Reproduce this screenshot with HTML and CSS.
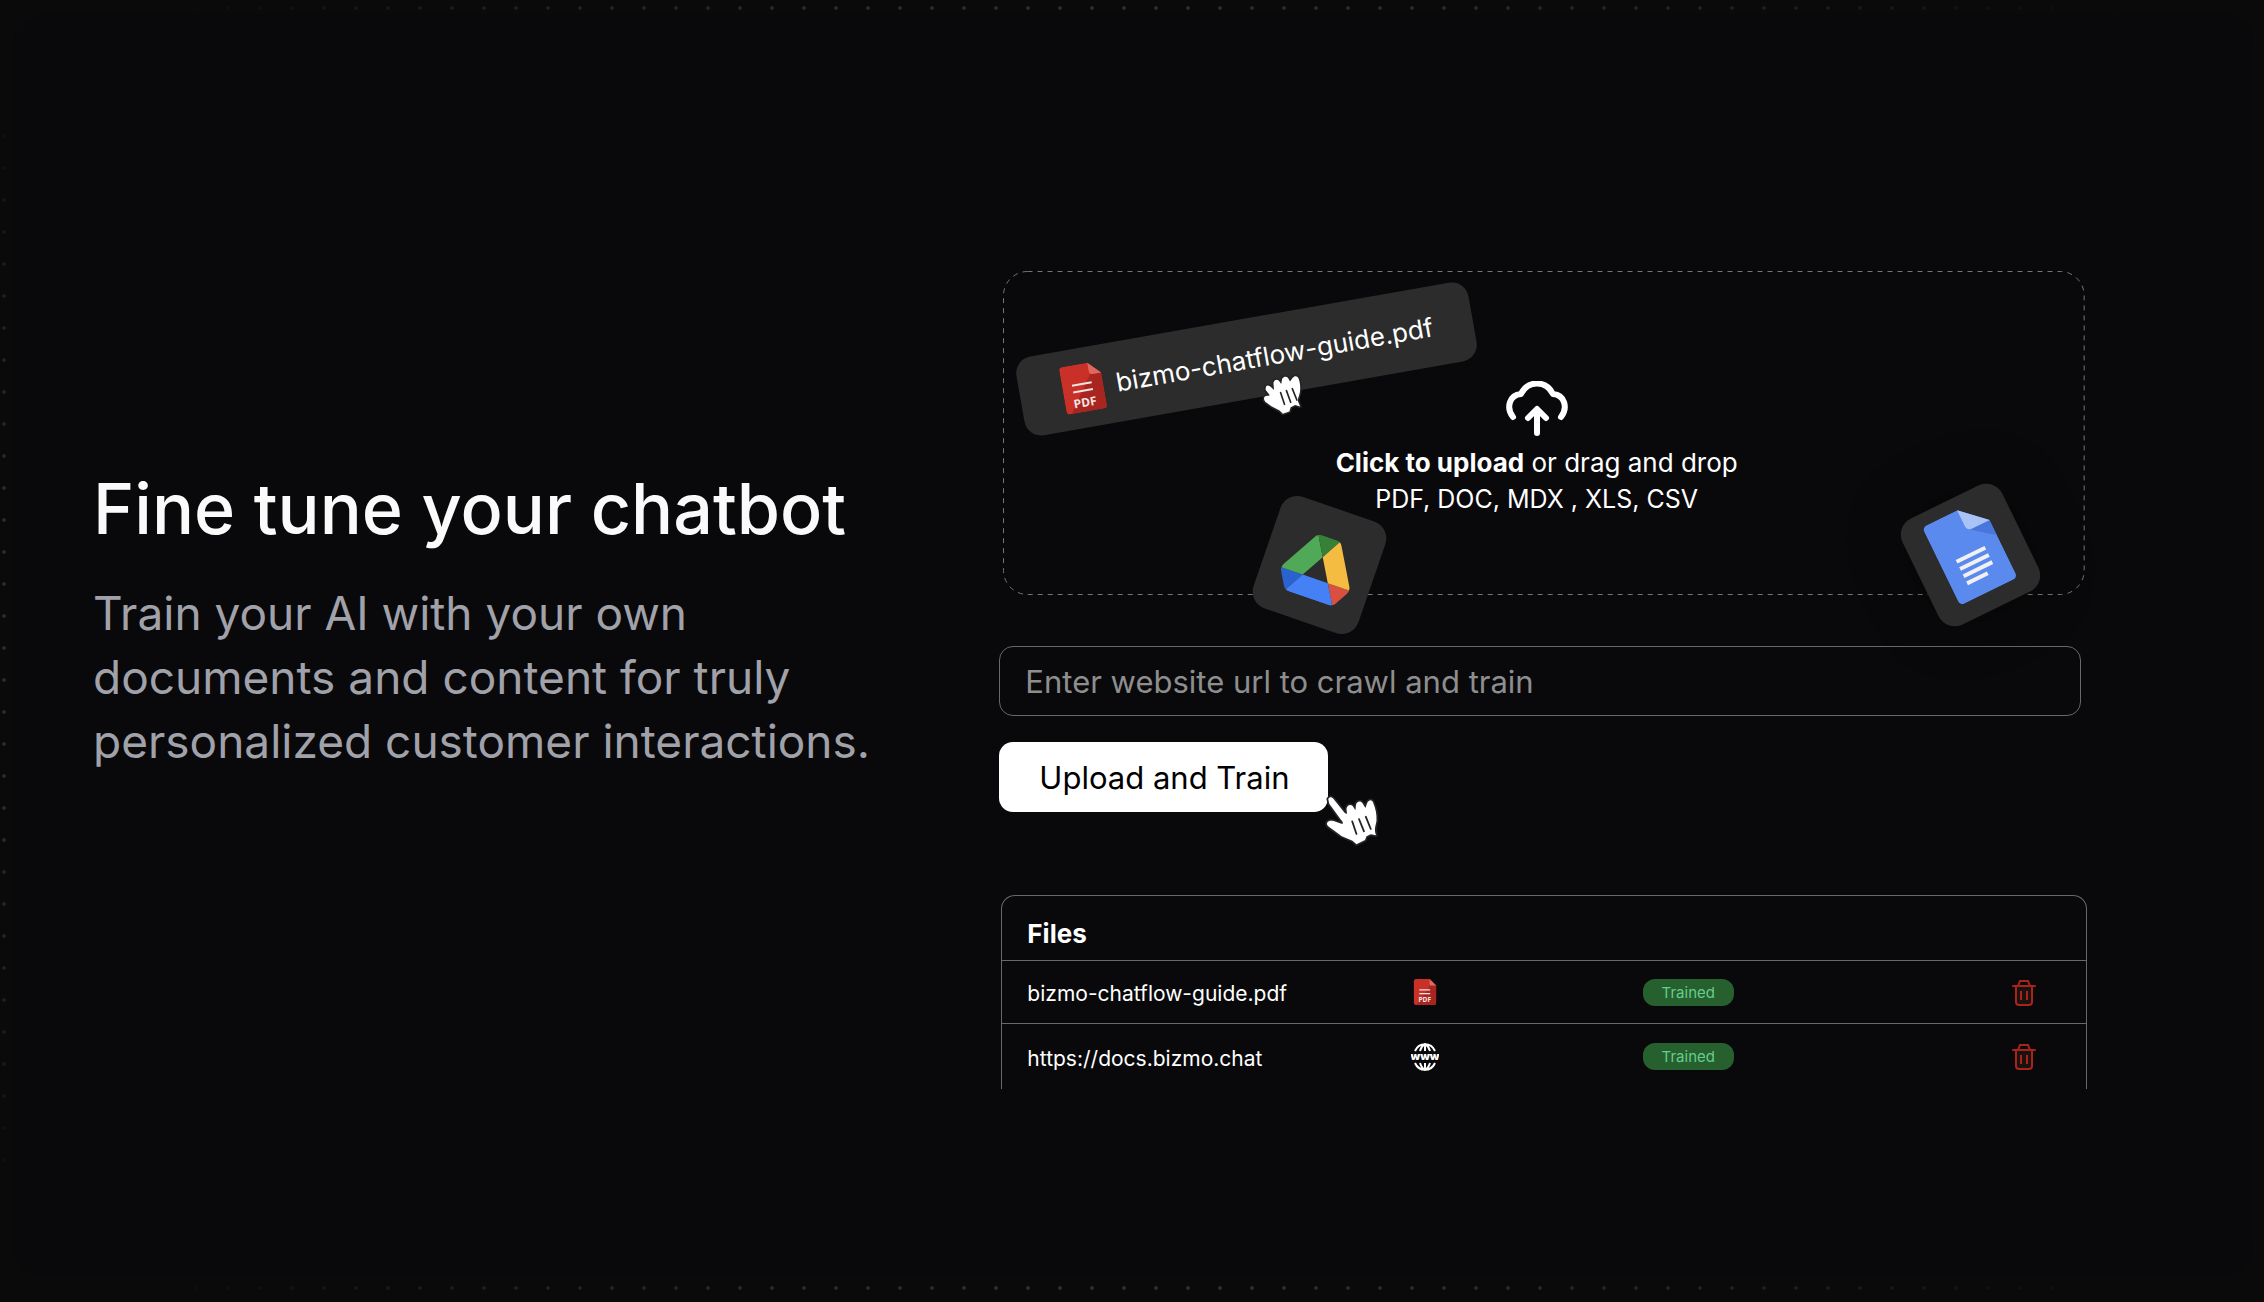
FILE: index.html
```html
<!DOCTYPE html>
<html lang="en">
<head>
    <meta charset="UTF-8">
    <meta name="viewport" content="width=device-width, initial-scale=1.0">
    <title>Fine tune your chatbot</title>
    <link rel="stylesheet" href="styles.css">
</head>
<body>
    <!-- shared icons -->
    <svg class="sprite" aria-hidden="true">
        <symbol id="pdf" viewBox="0 0 41 48">
            <path fill="#c93028" d="M4 0h25l12 12v32a4 4 0 0 1-4 4H4a4 4 0 0 1-4-4V4a4 4 0 0 1 4-4z"/>
            <path fill="#a92620" d="M29 12h12v32a4 4 0 0 1-4 4H5l21-31c2-3 3-3 3-5z"/>
            <path fill="#e2685f" d="M29 0l12 12H32a3 3 0 0 1-3-3z"/>
            <path stroke="#f3e4e3" stroke-width="2" d="M10 20h20M10 27h20"/>
            <text x="20" y="43" class="pdf-text">PDF</text>
        </symbol>
        <symbol id="trash" viewBox="0 0 24 27">
            <path fill="#1a1210" stroke="#a82418" stroke-width="2" stroke-linejoin="round" d="M4 7v16a3 3 0 0 0 3 3h10a3 3 0 0 0 3-3V7"/>
            <path fill="none" stroke="#a82418" stroke-width="2" stroke-linecap="round" d="M1 7h22M6 7l2-5h8l2 5"/>
            <path stroke="#a82418" stroke-width="2" d="M9 12v9M15 12v9"/>
        </symbol>
    </svg>

    <main class="page">
        <section class="card">
            <div class="intro">
                <h1>Fine tune your chatbot</h1>
                <p>Train your AI with your own documents and content for truly personalized customer interactions.</p>
            </div>

            <div class="demo">
                <div class="dropzone">
                    <svg class="dropzone-border" aria-hidden="true">
                        <rect x="0.5" y="0.5" width="100%" height="100%" rx="24"/>
                    </svg>
                    <input type="file" id="upload" class="hidden-input">
                    <label for="upload" class="upload-label">
                        <svg width="62" height="56" viewBox="0 0 62 56" aria-hidden="true">
                            <path d="M7 36C0 27 3 14 15 13C22-1 40-1 47 13C59 14 62 27 55 36M31 52V29M22 37l9-9 9 9"/>
                        </svg>
                        <span><strong>Click to upload</strong> or drag and drop</span>
                        <span class="formats">PDF, DOC, MDX , XLS, CSV</span>
                    </label>

                    <div class="pill">
                        <svg width="41" height="48"><use href="#pdf"/></svg>
                        bizmo-chatflow-guide.pdf
                    </div>
                    <svg class="cursor grab" width="43" height="45" viewBox="98 42 128 138" aria-hidden="true">
                        <path class="hand" d="M108 84C112 78 118 80 124 86L133 94L131 72C134 62 142 60 148 66L155 76L158 60C163 52 171 52 176 57L182 68L189 58C196 49 204 50 208 58C212 68 214 82 213 94C213 108 205 118 206 128L213 145L198 140L184 147L180 160L160 167L150 157L125 144L106 130C98 120 103 110 116 112L120 110L107 93Z"/>
                        <path class="gaps" d="M153 102L165 138M171 96L184 132M189 90L203 125"/>
                    </svg>
                    <div class="tile drive">
                        <svg width="72" height="64" viewBox="0 0 87.3 78" aria-hidden="true">
                            <path fill="#2a62cf" d="m6.6 66.85 3.85 6.65c.8 1.4 1.95 2.5 3.3 3.3l13.75-23.8H0c0 1.55.4 3.1 1.2 4.5z"/>
                            <path fill="#4fa956" d="m43.65 25-13.75-23.8c-1.35.8-2.5 1.9-3.3 3.3l-25.4 44A9 9 0 0 0 0 53h27.5z"/>
                            <path fill="#d95040" d="m73.55 76.8c1.35-.8 2.5-1.9 3.3-3.3l9.25-16c.8-1.4 1.2-2.95 1.2-4.5H59.8z"/>
                            <path fill="#378038" d="m43.65 25L57.4 1.2C56.05.4 54.5 0 52.9 0H34.4c-1.6 0-3.15.45-4.5 1.2z"/>
                            <path fill="#4581f4" d="M59.8 53H27.5L13.75 76.8c1.35.8 2.9 1.2 4.5 1.2h50.8c1.6 0 3.15-.45 4.5-1.2z"/>
                            <path fill="#f5bc42" d="m73.4 26.5-12.7-22c-.8-1.4-1.95-2.5-3.3-3.3L43.65 25 59.8 53h27.45c0-1.55-.4-3.1-1.2-4.5z"/>
                        </svg>
                    </div>
                    <div class="tile docs">
                        <svg width="64" height="87" viewBox="0 0 64 87" aria-hidden="true">
                            <path fill="#5a8aee" d="M5 0h34l25 23v59a5 5 0 0 1-5 5H5a5 5 0 0 1-5-5V5a5 5 0 0 1 5-5z"/>
                            <path fill="#4a76dc" d="M41 22l23 1v17z"/>
                            <path fill="#aac3f7" d="M39 0l25 23H44a5 5 0 0 1-5-5z"/>
                            <path stroke="#f1f1f1" stroke-width="4" d="M16 46h32M16 54h32M16 62h32M16 70h23"/>
                        </svg>
                    </div>
                </div>

                <input type="url" class="url-input" aria-label="Website url" placeholder="Enter website url to crawl and train">

                <div class="train">
                    <button type="button" class="train-button">Upload and Train</button>
                    <svg class="cursor point" width="54" height="54" viewBox="938 462 151 162" preserveAspectRatio="none" aria-hidden="true">
                        <path class="hand" d="M947 480C951 472 957 474 962 480L991 519C996 526 1001 526 999 518L998 510C1000 497 1010 495 1016 502L1023 514L1025 496C1029 485 1038 485 1043 493L1051 507L1056 492C1061 481 1070 481 1073 492C1079 508 1083 524 1082 545C1080 560 1074 570 1081 589L1066 586L1054 592L1050 603L1026 616L1015 605L985 592L947 562C938 551 948 542 962 546L984 554C991 556 988 548 983 543L950 494Z"/>
                        <path class="gaps" d="M1014 547L1026 585M1033 540L1047 577M1052 533L1066 570"/>
                    </svg>
                </div>

                <table class="files">
                    <thead>
                        <tr><th colspan="4">Files</th></tr>
                    </thead>
                    <tbody>
                        <tr>
                            <td class="name">bizmo-chatflow-guide.pdf</td>
                            <td class="type"><svg width="22" height="26" role="img" aria-label="PDF"><use href="#pdf"/></svg></td>
                            <td class="status"><span class="badge">Trained</span></td>
                            <td><button type="button" class="delete" aria-label="Delete bizmo-chatflow-guide.pdf"><svg width="24" height="27"><use href="#trash"/></svg></button></td>
                        </tr>
                        <tr>
                            <td class="name">https://docs.bizmo.chat</td>
                            <td class="type">
                                <svg class="globe" width="28" height="28" viewBox="0 0 28 28" role="img" aria-label="Website">
                                    <path d="M4 8C8-1 20-1 24 8M4 20c4 9 16 9 20 0M14 1v7M14 20v7M9 8c1-3 3-6 5-7 2 1 4 4 5 7M9 20c1 3 3 6 5 7 2-1 4-4 5-7"/>
                                    <text x="14" y="17">www</text>
                                </svg>
                            </td>
                            <td class="status"><span class="badge">Trained</span></td>
                            <td><button type="button" class="delete" aria-label="Delete https://docs.bizmo.chat"><svg width="24" height="27"><use href="#trash"/></svg></button></td>
                        </tr>
                    </tbody>
                </table>
            </div>
        </section>
    </main>
</body>
</html>
```
FILE: styles.css
```css
* {
    box-sizing: border-box;
}
body {
    margin: 0;
    background-color: #0a0a0b;
    color: white;
    font-family: Inter, sans-serif;
}
svg {
    display: block;
    flex-shrink: 0;
}
.sprite {
    display: none;
}
.page {
    position: relative;
    display: flex;
    min-height: 100vh;
    padding: 14px 10px 26px 13px;
}
/* dotted backdrop, fades out towards the corners */
.page::before {
    content: "";
    position: absolute;
    inset: 0;
    background-image: radial-gradient(circle at 4px 8px, #48484c 2px, transparent 2px);
    background-size: 32px 32px;
    mask-image: radial-gradient(ellipse at center, black 50%, transparent 93%);
}
.card {
    position: relative;
    flex: 1;
    display: grid;
    grid-template-columns: 5fr 6fr;
    align-items: center;
    padding: 70px 167px 0 80px;
    background-color: #09090b;
    border-radius: 32px;
}
.intro {
    max-width: 800px;
    margin-bottom: 120px;
}
h1 {
    margin: 0 0 30px;
    font-size: 70px;
    font-weight: 500;
    line-height: 84px;
    color: #fafafa;
}
.intro p {
    margin: 0;
    font-size: 46px;
    line-height: 64px;
    color: #a1a1aa;
}

.dropzone {
    position: relative;
    display: flex;
    justify-content: center;
    margin: 0 3px 52px 4px;
    padding: 110px 14px 77px 0;
}
.dropzone-border {
    position: absolute;
    inset: 0;
    width: 100%;
    height: 100%;
    overflow: visible;
}
.dropzone-border rect {
    fill: none;
    stroke: #757578;
    stroke-dasharray: 5 5;
}
.hidden-input {
    position: absolute;
    width: 1px;
    height: 1px;
    opacity: 0;
}
.upload-label {
    display: flex;
    flex-direction: column;
    align-items: center;
    font-size: 26px;
    line-height: 36px;
    cursor: pointer;
}
.upload-label svg {
    margin-bottom: 8px;
    fill: none;
    stroke: white;
    stroke-width: 6;
    stroke-linecap: round;
    stroke-linejoin: round;
}
.formats {
    font-size: 25px;
}
.pill, .tile {
    position: absolute;
    display: flex;
    align-items: center;
    background-color: #2c2c2c;
}
.pill {
    top: 48px;
    left: 14px;
    gap: 13px;
    height: 80px;
    padding: 0 40px 0 43px;
    border-radius: 17px;
    font-size: 26px;
    transform: rotate(-10deg);
}
.pdf-text {
    fill: #f3e4e3;
    font: bold 12px "Open Sans", sans-serif;
    text-anchor: middle;
}
.tile {
    justify-content: center;
    width: 111px;
    height: 118px;
    border-radius: 18px;
}
.drive {
    top: 235px;
    left: 261px;
    padding-top: 6px;
    transform: rotate(19deg);
}
.docs {
    top: 225px;
    right: 58px;
    padding-bottom: 6px;
    transform: rotate(-26deg);
    box-shadow: 0 0 60px rgba(0,0,0,0.3);
}
.cursor {
    position: absolute;
    overflow: visible;
}
.hand {
    fill: white;
    stroke: #242427;
    stroke-width: 10;
    stroke-linejoin: round;
    paint-order: stroke;
}
.gaps {
    fill: none;
    stroke: #242427;
    stroke-width: 5;
    stroke-linecap: round;
}
.grab {
    top: 102px;
    left: 259px;
}
.point {
    top: 51px;
    left: 326px;
}

.url-input {
    display: block;
    width: calc(100% - 6px);
    height: 70px;
    margin-bottom: 26px;
    padding: 0 25px;
    background: none;
    border: 1px solid #68686b;
    border-radius: 14px;
    color: white;
    font: 31px Inter, sans-serif;
}
.url-input::placeholder {
    color: #8e8e8e;
}
.train {
    position: relative;
    margin-bottom: 83px;
}
.train-button {
    height: 70px;
    padding: 0 38px 0 40px;
    background-color: white;
    border: none;
    border-radius: 14px;
    color: black;
    font: 31px Inter, sans-serif;
    cursor: pointer;
}
.train-button, .delete {
    display: block;
}

.files {
    width: calc(100% - 2px);
    margin-left: 2px;
    border: 1px solid #68686b;
    border-bottom: none;
    border-radius: 14px 14px 0 0;
    border-spacing: 0;
    text-align: left;
    font-size: 21px;
}
.files th, .files td {
    padding: 0;
}
.files th {
    height: 64px;
    padding: 11px 0 0 25px;
    font-size: 26px;
}
.files td {
    height: 63px;
    border-top: 1px solid #68686b;
}
.files tr:last-child td {
    height: 66px;
}
.files .name {
    width: 37.7%;
    padding: 3px 0 0 25px;
}
.type {
    width: 21.4%;
}
.type svg {
    width: 28px;
}
.status {
    width: 34.1%;
}
.badge {
    display: block;
    width: 91px;
    background-color: #27602f;
    border-radius: 12px;
    color: #65cd8b;
    font-size: 15px;
    line-height: 27px;
    text-align: center;
}
.delete {
    padding: 0;
    background: none;
    border: none;
    cursor: pointer;
}
.globe path {
    fill: none;
    stroke: white;
    stroke-width: 2;
}
.globe text {
    fill: white;
    font: 900 11px Inter, sans-serif;
    text-anchor: middle;
}
```
